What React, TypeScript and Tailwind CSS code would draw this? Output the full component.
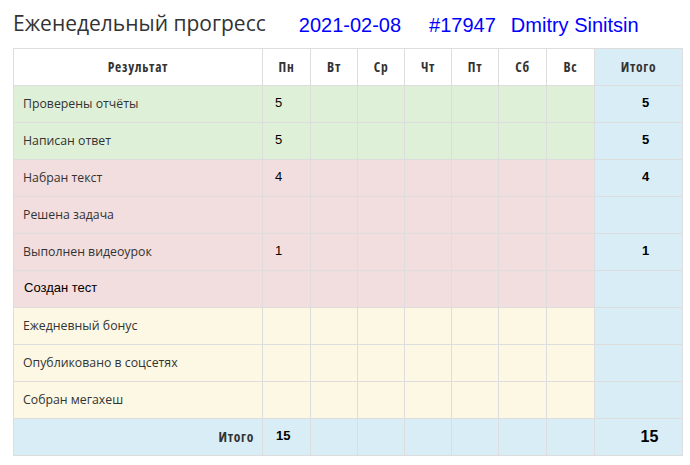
import React from 'react';

type Row = {
  label: string;
  tone: 'green' | 'red' | 'yellow';
  mon?: number;
  total?: number;
  arial?: boolean;
};

const rows: Row[] = [
  { label: 'Проверены отчёты', tone: 'green', mon: 5, total: 5 },
  { label: 'Написан ответ', tone: 'green', mon: 5, total: 5 },
  { label: 'Набран текст', tone: 'red', mon: 4, total: 4 },
  { label: 'Решена задача', tone: 'red' },
  { label: 'Выполнен видеоурок', tone: 'red', mon: 1, total: 1 },
  { label: 'Создан тест', tone: 'red', arial: true },
  { label: 'Ежедневный бонус', tone: 'yellow' },
  { label: 'Опубликовано в соцсетях', tone: 'yellow' },
  { label: 'Собран мегахеш', tone: 'yellow' },
];

const days = ['Пн', 'Вт', 'Ср', 'Чт', 'Пт', 'Сб', 'Вс'];
const widths = ['w-[48px]', 'w-[47px]', 'w-[47px]', 'w-[47px]', 'w-[47px]', 'w-[48px]', 'w-[48px]'];

const toneBg = {
  green: 'bg-[#dff0d8]',
  red: 'bg-[#f2dede]',
  yellow: 'bg-[#fcf8e3]',
};

const head = 'border border-[#ddd] text-[13.5px] font-bold font-stretch-condensed tracking-[0.7px] text-center';

const App = () => {
  return (
    <div className="min-h-screen bg-white px-[13px] pt-[8px] text-[#333]">
      <div className="flex items-baseline h-[40px]">
        <h1 className="text-[21px] font-['Open_Sans',sans-serif] text-[#333]">Еженедельный прогресс</h1>
        <div className="ml-[33px] flex gap-[28px] text-[20px] text-[#0000ff] font-['Liberation_Sans',Arial,sans-serif] translate-y-[1px]">
          <span>2021-02-08</span>
          <span className="flex gap-[15px]">
            <span>#17947</span>
            <span>Dmitry Sinitsin</span>
          </span>
        </div>
      </div>

      <table className="table-fixed border-collapse w-[669px] text-[12.3px] font-['Open_Sans',sans-serif]">
        <colgroup>
          <col className="w-[249px]" />
          {widths.map((w, i) => (
            <col key={i} className={w} />
          ))}
          <col className="w-[88px]" />
        </colgroup>
        <thead>
          <tr className="h-[37px]">
            <th className={head}>Результат</th>
            {days.map((d) => (
              <th key={d} className={head}>
                {d}
              </th>
            ))}
            <th className={`${head} bg-[#d9edf7]`}>Итого</th>
          </tr>
        </thead>
        <tbody>
          {rows.map((r) => (
            <tr key={r.label} className={`h-[37px] ${toneBg[r.tone]}`}>
              <td
                className={
                  r.arial
                    ? "border border-[#ddd] pl-[10px] text-[13px] text-black font-['Liberation_Sans',Arial,sans-serif] align-middle pb-[2px]"
                    : 'border border-[#ddd] pl-[9px] align-middle'
                }
              >
                {r.label}
              </td>
              {days.map((d, i) => (
                <td key={d} className="border border-[#ddd] pl-[12px] align-top pt-[7px] text-[13px] font-['Liberation_Sans',Arial,sans-serif] text-black">
                  {i === 0 && r.mon !== undefined ? r.mon : ''}
                </td>
              ))}
              <td className="border border-[#ddd] bg-[#d9edf7] align-top pt-[7px] pl-[14px] text-center text-[13px] font-bold font-['Liberation_Sans',Arial,sans-serif] text-black">
                {r.total ?? ''}
              </td>
            </tr>
          ))}
          <tr className="h-[37px] bg-[#d9edf7]">
            <td className="border border-[#ddd] pr-[8px] text-right font-bold text-[13.5px] font-stretch-condensed tracking-[0.7px] text-[#333] align-middle">
              Итого
            </td>
            {days.map((d, i) => (
              <td key={d} className="border border-[#ddd] pl-[13px] align-top pt-[7px] text-[13px] font-bold font-['Liberation_Sans',Arial,sans-serif] text-black">
                {i === 0 ? 15 : ''}
              </td>
            ))}
            <td className="border border-[#ddd] pl-[22px] text-center align-middle font-bold text-[16px] font-['Liberation_Sans',Arial,sans-serif] text-black">
              15
            </td>
          </tr>
        </tbody>
      </table>
    </div>
  );
};

export default App;
